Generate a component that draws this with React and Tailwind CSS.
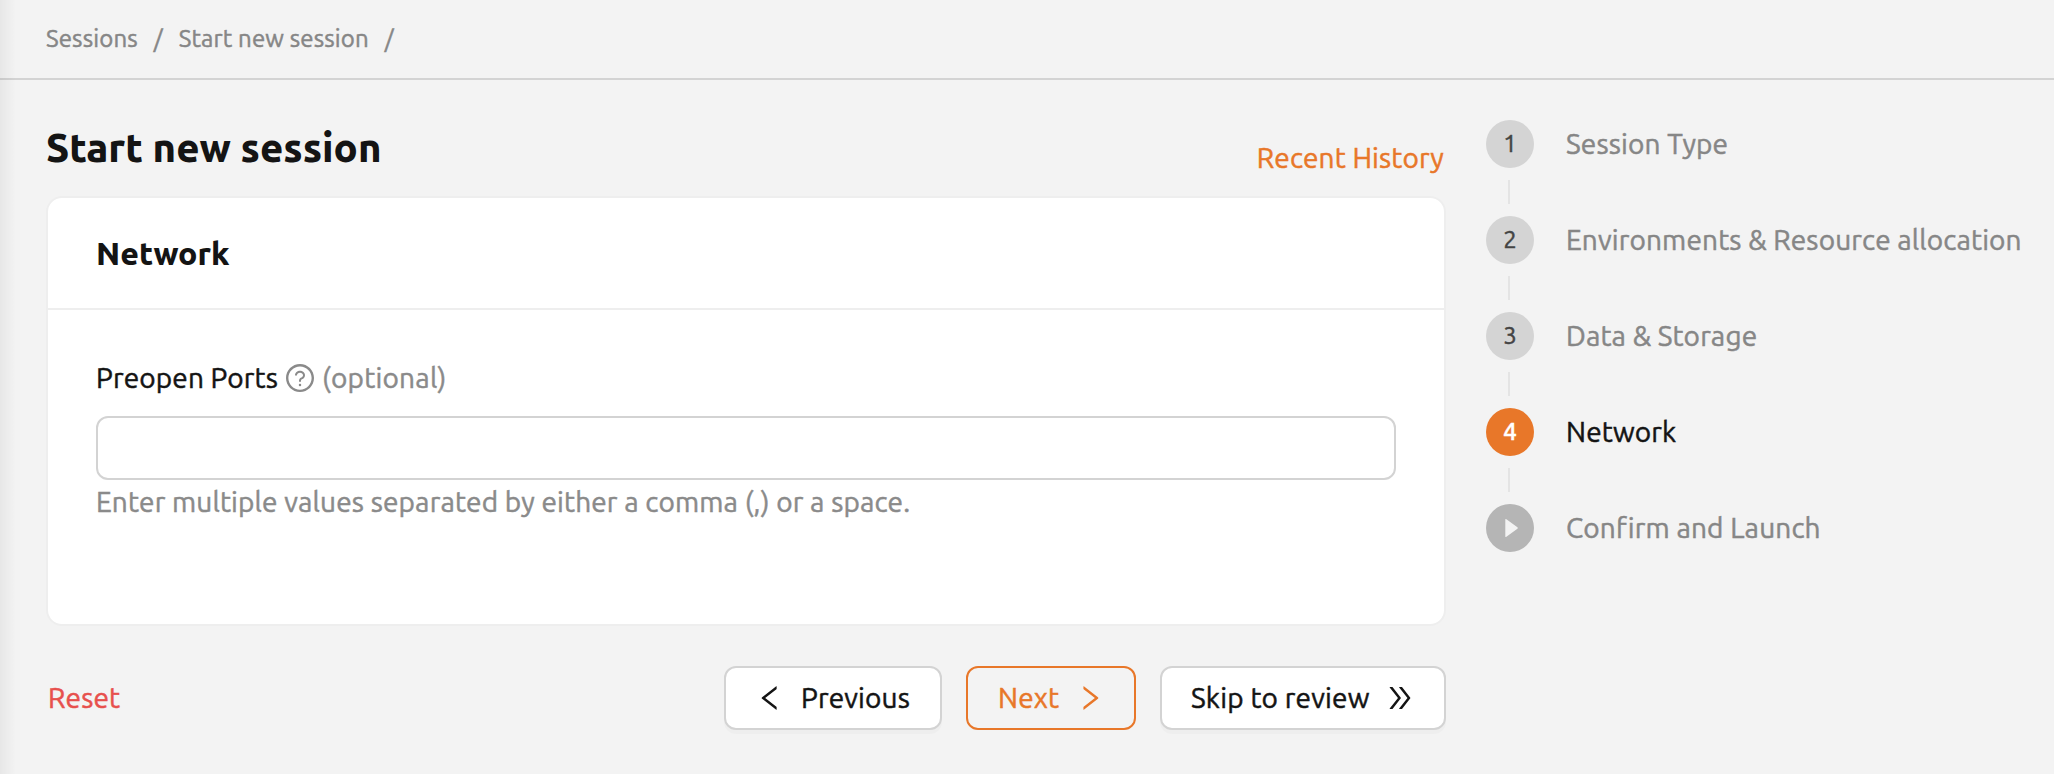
import {
  AiOutlineLeft,
  AiOutlineRight,
  AiOutlineDoubleRight,
  AiOutlineQuestionCircle,
} from "react-icons/ai";

const steps = [
  { mark: "1", label: "Session Type" },
  { mark: "2", label: "Environments & Resource allocation" },
  { mark: "3", label: "Data & Storage" },
  { mark: "4", label: "Network", active: true },
  { mark: "play", label: "Confirm and Launch" },
];

function Breadcrumb() {
  return (
    <nav className="flex h-20 shrink-0 items-center gap-4 border-b-2 border-[#d3d3d3] pl-[46px] text-2xl leading-8 text-[#868686]">
      <a>Sessions</a>
      <span>/</span>
      <a className="whitespace-nowrap">Start new session</a>
      <span>/</span>
    </nav>
  );
}

function StepMark({ mark, active }) {
  if (mark === "play") {
    return (
      <span className="flex size-12 items-center justify-center rounded-full bg-[#b5b5b5]">
        <svg viewBox="0 0 48 48" className="size-12 fill-[#f3f3f3]">
          <path d="M19.3 15.8q0-1.4 1.1-.6L31.4 23.3q1 .7 0 1.4L20.4 32.8q-1.1.8-1.1-.6z" />
        </svg>
      </span>
    );
  }
  return (
    <span
      className={
        active
          ? "flex size-12 items-center justify-center rounded-full bg-[#e87729] text-2xl font-medium text-white"
          : "flex size-12 items-center justify-center rounded-full bg-[#d4d4d4] text-2xl text-[#444444]"
      }
    >
      {mark}
    </span>
  );
}

function Steps() {
  return (
    <ol className="flex flex-col">
      {steps.map((s, i) => (
        <li key={s.label}>
          <div className="flex h-12 items-center gap-8">
            <StepMark mark={s.mark} active={s.active} />
            <span
              className={`whitespace-nowrap text-[28px] leading-[44px] ${
                s.active ? "text-[#141414]" : "text-[#868686]"
              }`}
            >
              {s.label}
            </span>
          </div>
          {i < steps.length - 1 && (
            <div className="my-3 ml-[22px] h-6 w-0.5 bg-[#e4e4e4]" />
          )}
        </li>
      ))}
    </ol>
  );
}

function NetworkCard() {
  return (
    <section className="h-[430px] rounded-2xl border-2 border-[#eeeeee] bg-white">
      <header className="flex h-28 items-center border-b-2 border-[#eeeeee] pl-12">
        <h2 className="text-[32px] font-extrabold leading-[44px] tracking-normal [-webkit-text-stroke:0px]">Network</h2>
      </header>
      <div className="px-12 pt-[46px]">
        <label className="flex h-11 items-center text-[28px] leading-[44px]">
          <span className="whitespace-nowrap">Preopen Ports</span>
          <AiOutlineQuestionCircle className="ml-1.5 size-8 text-[#8a8a8a]" />
          <span className="ml-1.5 tracking-[0.25px] text-[#8a8a8a]">(optional)</span>
        </label>
        <input
          type="text"
          className="mt-4 block h-16 w-full rounded-xl border-2 border-[#d3d3d3] bg-white px-6 text-[28px] outline-none"
        />
        <p className="whitespace-nowrap text-[28px] leading-[44px] text-[#8a8a8a]">
          Enter multiple values separated by either a comma (,) or a space.
        </p>
      </div>
    </section>
  );
}

function Actions() {
  return (
    <div className="mt-10 flex h-16 items-center text-[28px] leading-[44px]">
      <button className="mr-auto pl-0.5 text-[#e7504d]">Reset</button>
      <div className="flex gap-6">
        <button className="flex h-16 w-[218px] items-center justify-between rounded-xl border-2 border-[#d3d3d3] bg-white pl-7 pr-[30px] shadow-[0_4px_0_rgba(0,0,0,0.02)]">
          <AiOutlineLeft className="size-8" />
          <span>Previous</span>
        </button>
        <button className="flex h-16 w-[170px] items-center justify-between rounded-xl border-2 border-[#e87729] pl-[30px] pr-7 text-[#e87729]">
          <span>Next</span>
          <AiOutlineRight className="size-8" />
        </button>
        <button className="flex h-16 w-[286px] items-center justify-between whitespace-nowrap rounded-xl border-2 border-[#d3d3d3] bg-white pl-[29px] pr-7 shadow-[0_4px_0_rgba(0,0,0,0.02)]">
          <span className="tracking-[0.2px]">Skip to review</span>
          <AiOutlineDoubleRight className="size-8" />
        </button>
      </div>
    </div>
  );
}

export default function App() {
  return (
    <div className="relative flex h-[774px] w-full flex-col overflow-hidden bg-[#f3f3f3] font-['Ubuntu','Noto_Sans',sans-serif] tracking-[0.15px] text-[#141414] [-webkit-text-stroke:0.5px]">
      <div className="pointer-events-none absolute inset-y-0 left-0 w-4 bg-linear-to-r from-black/5 to-transparent" />
      <Breadcrumb />
      <main className="flex gap-10 pl-[46px] pt-10">
        <div className="w-[1400px] shrink-0">
          <div className="flex h-[76px] items-start justify-between">
            <h1 className="text-[40px] font-extrabold leading-[56px] tracking-normal [-webkit-text-stroke:0px]">Start new session</h1>
            <a className="mr-0.5 mt-4 text-[28px] leading-[44px] text-[#e87729]">Recent History</a>
          </div>
          <NetworkCard />
          <Actions />
        </div>
        <Steps />
      </main>
    </div>
  );
}
